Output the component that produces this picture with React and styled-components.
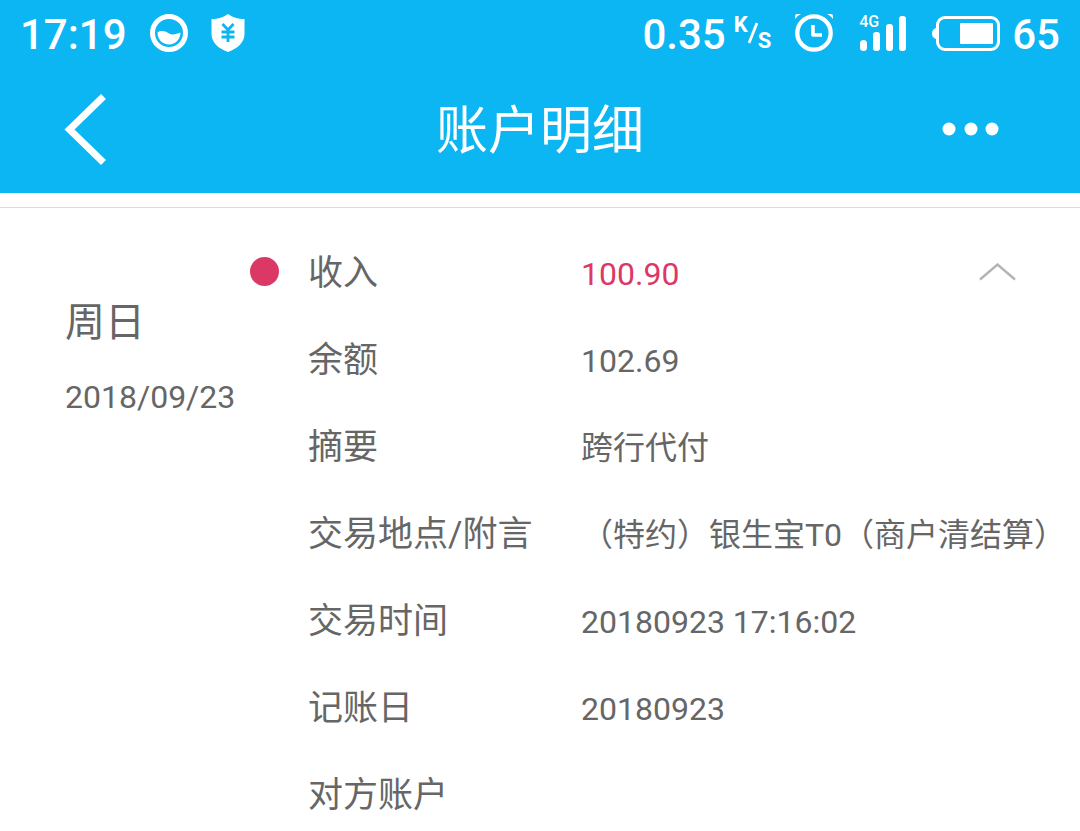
import React, { useState } from "react";
import styled, { createGlobalStyle } from "styled-components";

const GlobalStyle = createGlobalStyle`
  * { box-sizing: border-box; }
  body {
    margin: 0;
    background: #fff;
    color: #666;
    font-family: Roboto, "Noto Sans CJK SC", sans-serif;
  }
`;

const Header = styled.header`
  background: #0bb6f3;
  color: #fff;
`;

const StatusBar = styled.div`
  display: flex;
  justify-content: space-between;
  align-items: center;
  height: 66px;
  padding: 0 20px;
  font-size: 42px;
  font-weight: 500;
  line-height: 48px;
`;

const StatusGroup = styled.div`
  display: flex;
  align-items: center;
  gap: ${({ $gap }) => $gap}px;
`;

const StatusText = styled.span`
  padding-top: 3px;
`;

const Icon = styled.svg`
  display: block;
  flex: none;
`;

const Speed = styled.span`
  display: flex;
  align-items: center;
  gap: 8px;
`;

const Unit = styled.span`
  display: flex;
  align-items: center;
  font-size: 22px;
  font-weight: 700;
  line-height: 24px;
`;

const UnitTop = styled.span`
  padding-bottom: 16px;
`;

const UnitBottom = styled.span`
  padding-top: 16px;
`;

const Signal = styled.span`
  display: grid;
`;

const SignalLabel = styled.span`
  grid-area: 1 / 1;
  font-size: 16px;
  line-height: 12px;
`;

const SignalBars = styled(Icon)`
  grid-area: 1 / 1;
`;

const NavBar = styled.div`
  display: grid;
  grid-template-columns: 1fr auto 1fr;
  align-items: center;
  height: 127px;
  padding: 0 64px;
`;

const Title = styled.h1`
  margin: 0;
  padding-top: 4px;
  font-size: 52px;
  font-weight: 400;
  line-height: 64px;
`;

const IconButton = styled.button`
  display: block;
  padding: 0;
  border: 0;
  background: none;
  color: inherit;
  cursor: pointer;
  justify-self: ${({ $side }) => $side};
`;

const MoreButton = styled(IconButton)`
  margin-right: 16px;
`;

const Entry = styled.main`
  display: grid;
  grid-template-columns: 185px 58px 1fr;
  margin-top: 14px;
  padding: 21px 0 0 65px;
  border-top: 1px solid #dcdcdc;
`;

const DateBlock = styled.div`
  padding-top: 64px;
`;

const Weekday = styled.div`
  font-size: 40px;
  line-height: 60px;
`;

const DateText = styled.time`
  display: block;
  margin-top: 22px;
  font-size: 32px;
  line-height: 44px;
`;

const Dot = styled.span`
  width: 29px;
  height: 29px;
  margin-top: 28px;
  border-radius: 50%;
  background: #dc3865;
`;

const Details = styled.dl`
  margin: 0;
`;

const Row = styled.div`
  display: grid;
  grid-template-columns: 273px 1fr auto;
  align-items: baseline;
  height: 87px;
  padding-top: 15px;
`;

const Label = styled.dt`
  font-size: 35px;
  white-space: nowrap;
`;

const Value = styled.dd`
  margin: 0;
  font-size: 32px;
  white-space: nowrap;
  color: ${({ $income }) => ($income ? "#dc3865" : "inherit")};
`;

const ToggleCell = styled.dd`
  align-self: start;
  margin: 19px 64px 0 0;
`;

const rows = [
  ["余额", "102.69"],
  ["摘要", "跨行代付"],
  ["交易地点/附言", "（特约）银生宝T0（商户清结算）"],
  ["交易时间", "20180923 17:16:02"],
  ["记账日", "20180923"],
  ["对方账户", ""],
];

export default function App() {
  const [open, setOpen] = useState(true);
  return (
    <>
      <GlobalStyle />
      <Header>
        <StatusBar>
          <StatusGroup $gap={23}>
            <StatusText>17:19</StatusText>
            <Icon width="38" height="38" viewBox="0 0 38 38" aria-hidden="true">
              <circle cx="19" cy="19" r="16.5" fill="none" stroke="#fff" strokeWidth="5" />
              <path d="M7.5 18.5C11 16 15 17 18.5 19.2C22.5 21.6 26 20 30.5 18.5C30.5 25 25.5 30.5 19 30.5C12.5 30.5 7.5 25.5 7.5 18.5Z" fill="#fff" />
            </Icon>
            <Icon width="34" height="38" viewBox="0 0 34 38" aria-hidden="true">
              <path d="M17 0C21 3 27 5 33.5 5V20C33.5 28 27 34.5 17 38C7 34.5 .5 28 .5 20V5C7 5 13 3 17 0Z" fill="#fff" />
              <path d="M11.5 10L17 16L22.500 10M17 16V28M10.500 18H23.500M10.500 23H23.500" fill="none" stroke="#0bb6f3" strokeWidth="2.800" />
            </Icon>
          </StatusGroup>
          <StatusGroup $gap={26}>
            <StatusGroup $gap={24}>
              <Speed>
                <StatusText>0.35</StatusText>
                <Unit>
                  <UnitTop>K</UnitTop>
                  <Icon width="10" height="24" viewBox="0 0 10 24" aria-hidden="true">
                    <path d="M9 2L1 22" stroke="#fff" strokeWidth="2.800" />
                  </Icon>
                  <UnitBottom>S</UnitBottom>
                </Unit>
              </Speed>
              <Icon width="38" height="38" viewBox="0 0 38 38" aria-hidden="true">
                <circle cx="19" cy="19" r="16.700" fill="none" stroke="#fff" strokeWidth="4.300" />
                <path d="M18 11V21H27" fill="none" stroke="#fff" strokeWidth="3.600" strokeLinejoin="round" />
                <path d="M0 5V2Q0 0 2 0H6Q2.500 1.500 0 5ZM38 5V2Q38 0 36 0H32Q35.500 1.500 38 5Z" fill="#fff" />
              </Icon>
            </StatusGroup>
            <StatusGroup $gap={25}>
              <Signal>
                <SignalLabel>4G</SignalLabel>
                <SignalBars width="48" height="35" viewBox="0 0 48 35" aria-hidden="true">
                  <g fill="#fff">
                    <rect x="1" y="24" width="7" height="11" rx="3.500" />
                    <rect x="14" y="16" width="7" height="19" rx="3" />
                    <rect x="27" y="8" width="7" height="27" rx="3" />
                    <rect x="40" y="0" width="7" height="35" rx="3" />
                  </g>
                </SignalBars>
              </Signal>
              <StatusGroup $gap={12}>
                <Icon width="68" height="35" viewBox="0 0 68 35" aria-hidden="true">
                  <rect x="5.500" y="1.500" width="61" height="32" rx="7.500" fill="none" stroke="#fff" strokeWidth="3" />
                  <path d="M5 11.500Q0 13 0 17.500Q0 22 5 23.500Z" fill="#fff" />
                  <rect x="28" y="7" width="33" height="21" rx="1" fill="#fff" />
                </Icon>
                <StatusText>65</StatusText>
              </StatusGroup>
            </StatusGroup>
          </StatusGroup>
        </StatusBar>
        <NavBar>
          <IconButton type="button" aria-label="返回" $side="start">
            <Icon width="42" height="72" viewBox="0 0 42 72" aria-hidden="true">
              <path d="M39.500 2.500L5.500 35.500L39.500 68.500" fill="none" stroke="#fff" strokeWidth="7" />
            </Icon>
          </IconButton>
          <Title>账户明细</Title>
          <MoreButton type="button" aria-label="更多" $side="end">
            <Icon width="58" height="16" viewBox="0 0 58 16" aria-hidden="true">
              <g fill="#fff">
                <circle cx="7" cy="7" r="6.500" />
                <circle cx="29" cy="7" r="6.500" />
                <circle cx="50" cy="7" r="6.500" />
              </g>
            </Icon>
          </MoreButton>
        </NavBar>
      </Header>
      <Entry>
        <DateBlock>
          <Weekday>周日</Weekday>
          <DateText dateTime="2018-09-23">2018/09/23</DateText>
        </DateBlock>
        <Dot />
        <Details>
          <Row>
            <Label>收入</Label>
            <Value $income>100.90</Value>
            <ToggleCell>
              <IconButton
                type="button"
                aria-label="收起或展开"
                aria-expanded={open}
                onClick={() => setOpen(!open)}
              >
                <Icon width="37" height="18" viewBox="0 0 37 18" aria-hidden="true">
                  <path d={open ? "M1 16.500L18.500 1.500L36 16.500" : "M1 1L18.500 16.500L36 1"} fill="none" stroke="#b4b4b4" strokeWidth="2.400" />
                </Icon>
              </IconButton>
            </ToggleCell>
          </Row>
          {open &&
            rows.map(([label, value]) => (
              <Row key={label}>
                <Label>{label}</Label>
                <Value>{value}</Value>
              </Row>
            ))}
        </Details>
      </Entry>
    </>
  );
}
